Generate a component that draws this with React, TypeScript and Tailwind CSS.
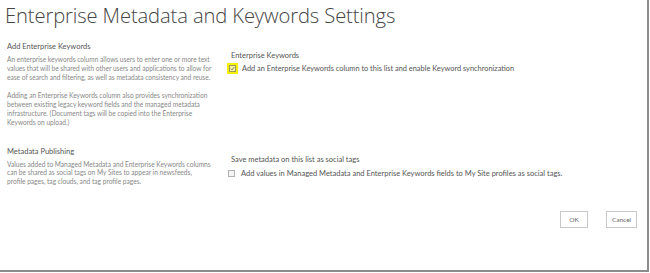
import React from "react";

const Check = ({ checked }: { checked?: boolean }) =>
  checked ? (
    <span className="flex h-[11px] w-[11px] items-center justify-center bg-[#f5f000]">
      <span className="flex h-[7px] w-[7px] items-center justify-center border border-[#9a9a60] bg-[#f8f6a0]">
        <svg viewBox="0 0 8 8" className="h-[7px] w-[7px]">
          <path d="M1.2 4.2 L3.2 6.2 L6.8 1.5" fill="none" stroke="#555" strokeWidth="1.2" />
        </svg>
      </span>
    </span>
  ) : (
    <span className="h-[7px] w-[7px] border border-[#b0b0b0] bg-[#f4f4f4]" />
  );

export default function App() {
  const sans = { fontFamily: "Lato, 'Open Sans', sans-serif" } as React.CSSProperties;
  return (
    <div className="relative h-[273px] w-[650px] overflow-hidden bg-white" style={sans}>
      <div className="flex h-[272px] w-[649px] flex-col border-r-[2px] border-b-[2px] border-[#8c8c8c]">
        <h1
          className="ml-[5px] mt-[1px] whitespace-nowrap text-[20.2px] font-light leading-[28px] tracking-[-0.12px] text-[#444]"
          style={{ fontFamily: "'Open Sans', sans-serif" }}
        >
          Enterprise Metadata and Keywords Settings
        </h1>

        <div className="mt-[13px] flex">
          <div className="ml-[7px] w-[222px]">
            <div className="text-[7.5px] leading-[10px] text-[#555]">Add Enterprise Keywords</div>
            <div className="mt-[3px] whitespace-nowrap text-[6.6px] leading-[8.8px] text-[#888]">
              <div>An enterprise keywords column allows users to enter one or more text</div>
              <div>values that will be shared with other users and applications to allow for</div>
              <div>ease of search and filtering, as well as metadata consistency and reuse.</div>
              <div className="mt-[10px]">Adding an Enterprise Keywords column also provides synchronization</div>
              <div>between existing legacy keyword fields and the managed metadata</div>
              <div>infrastructure. (Document tags will be copied into the Enterprise</div>
              <div>Keywords on upload.)</div>
            </div>
          </div>
          <div className="mt-[9px] ml-[2px]">
            <div className="text-[7.5px] leading-[10px] text-[#555]">Enterprise Keywords</div>
            <div className="mt-[2px] ml-[-4px] flex items-center gap-[4px] whitespace-nowrap text-[7.4px] leading-[10px] text-[#555]">
              <Check checked />
              <span>Add an Enterprise Keywords column to this list and enable Keyword synchronization</span>
            </div>
          </div>
        </div>

        <div className="mt-[20px] flex">
          <div className="ml-[7px] w-[222px]">
            <div className="text-[7.5px] leading-[10px] text-[#555]">Metadata Publishing</div>
            <div className="mt-[3px] whitespace-nowrap text-[6.6px] leading-[8.8px] text-[#888]">
              <div>Values added to Managed Metadata and Enterprise Keywords columns</div>
              <div>can be shared as social tags on My Sites to appear in newsfeeds,</div>
              <div>profile pages, tag clouds, and tag profile pages.</div>
            </div>
          </div>
          <div className="mt-[8px] ml-[2px]">
            <div className="text-[7.5px] leading-[10px] text-[#555]">Save metadata on this list as social tags</div>
            <div className="mt-[4px] ml-[-3px] flex items-center gap-[6px] whitespace-nowrap text-[7.5px] leading-[10px] text-[#555]">
              <Check />
              <span>Add values in Managed Metadata and Enterprise Keywords fields to My Site profiles as social tags.</span>
            </div>
          </div>
        </div>

        <div className="mt-[25px] mr-[10px] flex justify-end gap-[18px]">
          <button className="h-[17px] w-[28px] border border-[#c8c8c8] bg-white text-[6.5px] text-[#666]">OK</button>
          <button className="h-[17px] w-[31px] border border-[#c8c8c8] bg-white text-[6.5px] text-[#666]">Cancel</button>
        </div>
      </div>
    </div>
  );
}
